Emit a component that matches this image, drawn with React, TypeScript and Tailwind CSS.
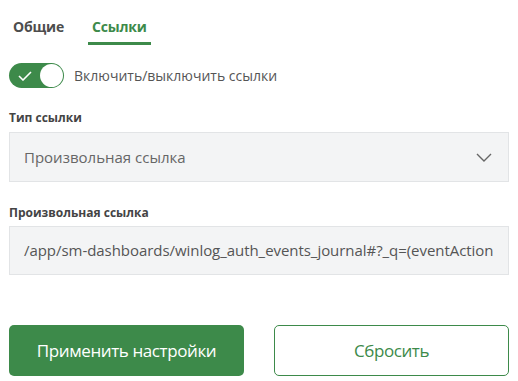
import React from "react";

export default function App() {
  return (
    <div className="w-[518px] h-[381px] bg-white overflow-hidden font-['Open_Sans',sans-serif] text-[#4a4a4a]">
      <div className="flex gap-[24px] pl-[13px] pt-[15px] h-[45px]">
        <div className="text-[14px] font-bold text-[#4d4d4d] leading-[24px] tracking-[-0.2px]">Общие</div>
        <div className="relative text-[14px] font-bold text-[#3d8a4a] leading-[24px] px-[4px] tracking-[-0.2px]">
          Ссылки
          <div className="absolute left-0 right-0 top-[27px] h-[3px] bg-[#3d8a4a]" />
        </div>
      </div>
      <div className="flex items-center gap-[10px] pl-[9px] mt-[18px]">
        <div className="w-[55px] h-[25px] rounded-full bg-[#3d8a4a] relative flex items-center">
          <svg className="ml-[9px]" width="14" height="10" viewBox="0 0 14 10" fill="none">
            <path d="M1 5l4 4 8-8" stroke="white" strokeWidth="1.6" />
          </svg>
          <div className="absolute right-[1px] top-[1px] w-[23px] h-[23px] rounded-full bg-white" />
        </div>
        <span className="text-[14px] text-[#555]">Включить/выключить ссылки</span>
      </div>
      <div className="px-[9px] mt-[22px]">
        <div className="text-[12px] font-bold text-[#444] leading-[16px]">Тип ссылки</div>
        <div className="mt-[6px] h-[50px] bg-[#f3f4f5] border border-[#e2e4e6] flex items-center justify-between pl-[14px] pr-[16px]">
          <span className="text-[15px] text-[#666]">Произвольная ссылка</span>
          <svg width="16" height="9" viewBox="0 0 16 9" fill="none">
            <path d="M1 1l7 7 7-7" stroke="#666" strokeWidth="1.4" />
          </svg>
        </div>
        <div className="text-[12px] font-bold text-[#444] leading-[16px] mt-[23px]">Произвольная ссылка</div>
        <div className="mt-[5px] h-[49px] bg-[#f3f4f5] border border-[#e2e4e6] flex items-center pl-[14px] overflow-hidden">
          <span className="text-[15px] text-[#555] whitespace-nowrap tracking-[-0.05px]">/app/sm-dashboards/winlog_auth_events_journal#?_q=(eventAction</span>
        </div>
        <div className="flex gap-[30px] mt-[50px]">
          <button className="w-[235px] h-[51px] rounded-[5px] bg-[#3d8a4a] text-white text-[17px] tracking-[-0.4px]">Применить настройки</button>
          <button className="flex-1 h-[51px] rounded-[5px] border border-[#3d8a4a] bg-white text-[#3d8a4a] text-[17px] tracking-[-0.4px]">Сбросить</button>
        </div>
      </div>
    </div>
  );
}
